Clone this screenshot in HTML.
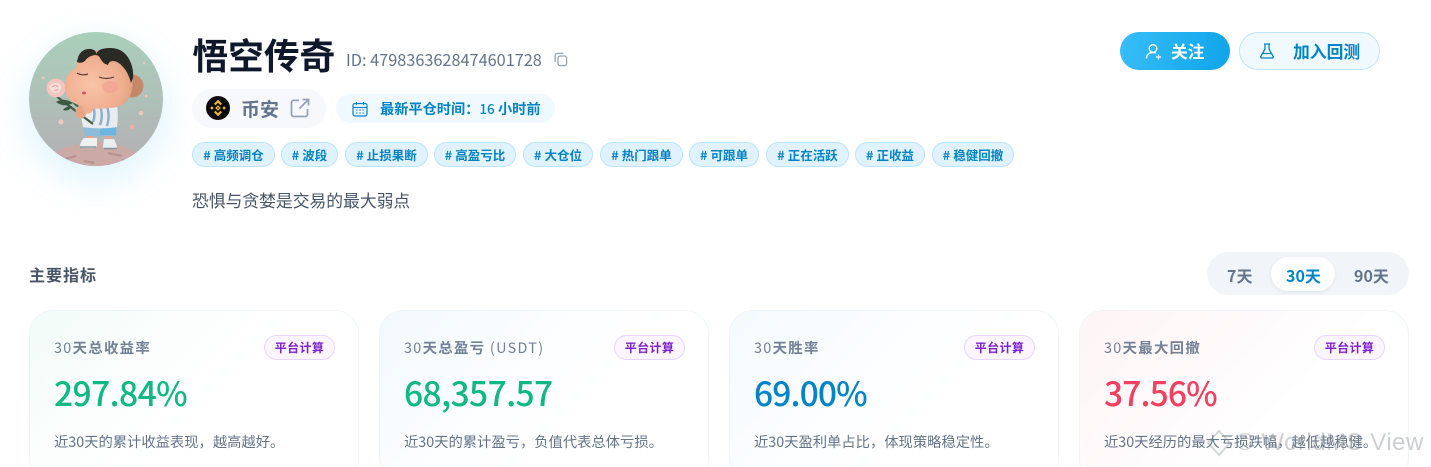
<!DOCTYPE html>
<html lang="zh"><head><meta charset="utf-8"><title>悟空传奇</title>
<style>
*{box-sizing:border-box;margin:0;padding:0}
html,body{width:1431px;height:467px;overflow:hidden;background:#fff}
body{position:relative;font-family:"Noto Sans CJK SC","Liberation Sans",sans-serif;color:#0f172a}
#clip{position:absolute;left:0;top:0;width:1431px;height:467px;overflow:hidden}
.a{position:absolute;white-space:nowrap}
.glow{left:29px;top:32px;width:134px;height:134px;border-radius:50%;box-shadow:0 12px 34px 4px rgba(56,189,248,.15)}
h1{left:192.500px;top:29px;font-size:35.7px;line-height:52px;font-weight:700;color:#0f172a}
.id{left:346px;top:48px;font-size:16.3px;line-height:22px;color:#64748b}
.ex{left:192px;top:89px;width:134px;height:39px;border-radius:20px;background:#f6f8fc}
.ext{left:241px;top:95px;font-size:19px;line-height:27px;font-weight:700;color:#64748b}
.time{left:336px;top:94px;width:219px;height:29px;border-radius:15px;background:#f0f9ff}
.tt{left:380px;top:98px;font-size:14.2px;line-height:21px;font-weight:700;color:#0284c7}
.tag{top:142px;height:25px;border-radius:13px;background:#e0f2fe;border:1px solid #bae6fd;color:#0284c7;font-size:12.5px;font-weight:700;line-height:23px;text-align:center}
.tag i{font-style:normal;font-weight:700;margin-right:3px}
.desc{left:192px;top:188px;font-size:16.8px;line-height:24px;color:#475569}
.main{left:29px;top:263px;font-size:16px;line-height:22px;font-weight:700;color:#475569;letter-spacing:1px}
.seg{left:1207px;top:252px;width:202px;height:43px;border-radius:22px;background:#f1f5f9}
.on{left:1271px;top:257px;width:64px;height:34px;border-radius:17px;background:#fff;box-shadow:0 1px 3px rgba(15,23,42,.08)}
.s{top:263px;font-size:16px;line-height:24px;font-weight:700;color:#64748b}
.btn1{left:1120px;top:32px;width:110px;height:38px;border-radius:19px;background:linear-gradient(100deg,#38bdf8,#0ea5e9)}
.btn2{left:1239px;top:32px;width:141px;height:38px;border-radius:19px;background:#f0f9ff;border:1px solid #bae6fd}
.bt{top:40px;font-size:16.8px;line-height:23px;font-weight:700}
.card{top:310px;width:330px;height:172px;border-radius:24px;border:1px solid #f1f5f9;background:#fff}
.l{top:338px;font-size:14.4px;line-height:20px;font-weight:700;color:#64748b;letter-spacing:1.3px;opacity:.9}
.l b{font-weight:400}
.b{top:335px;width:71px;height:25px;border-radius:13px;background:#faf5ff;border:1px solid #e9d5ff;color:#7e22ce;font-size:12px;line-height:23px;font-weight:700;text-align:center;letter-spacing:.4px}
.v{top:367px;font-size:33.6px;line-height:50px;font-weight:500;letter-spacing:-.6px}
.v2{letter-spacing:-.9px}
.d{top:431px;font-size:14.3px;line-height:22px;color:#64748b}
.wm{left:1236px;top:428px;font-size:24px;line-height:30px;color:rgba(120,130,135,.38);font-family:"Liberation Sans",sans-serif;letter-spacing:.5px}
</style></head><body><div id="clip">
<div class="a glow"></div>
<svg class="a" style="left:0;top:0" width="190" height="190" viewBox="0 0 190 190">
<defs>
<linearGradient id="bg" x1="0" y1="0" x2="0" y2="1"><stop offset="0" stop-color="#a9cfb9"/><stop offset=".5" stop-color="#afc0b8"/><stop offset="1" stop-color="#b4afb4"/></linearGradient>
<radialGradient id="face" cx=".4" cy=".6" r=".7"><stop offset="0" stop-color="#f8c4a8"/><stop offset=".65" stop-color="#f0ae90"/><stop offset="1" stop-color="#d9997a"/></radialGradient>
<clipPath id="c"><circle cx="96" cy="99" r="67"/></clipPath>
</defs>
<g clip-path="url(#c)">
<rect x="29" y="32" width="134" height="134" fill="url(#bg)"/>
<ellipse cx="96" cy="186" rx="62" ry="44" fill="#cba9a5"/>
<path d="M62 160l14-4M108 153l14 3M84 161l10 2M122 160l8 2" stroke="#a98a84" stroke-width="2" opacity=".7"/>
<circle cx="61" cy="122" r="2.5" fill="#f5c7bd"/><circle cx="141" cy="113" r="2.3" fill="#f2c6b8"/><circle cx="132" cy="127" r="2.3" fill="#eeb0a4"/><circle cx="146" cy="96" r="1.5" fill="#f2c6c0"/><circle cx="43" cy="78" r="1.5" fill="#f2c6c0"/><circle cx="144" cy="63" r="1.2" fill="#e9c5c0"/>
<!-- legs and shoes -->
<path d="M87 135h6v5h-6zM106 135h6v5h-6z" fill="#e8a586"/>
<path d="M84 138h13v6q0 4-3 4H83q-4 0-3-3q1-4 4-7z" fill="#eef1f2"/><path d="M104 139h10l3 7q0 3-3 3h-8q-3 0-3-3z" fill="#e9eef0"/>
<path d="M80 147h16M104 148.500h13" stroke="#7f97a0" stroke-width="1.500"/>
<!-- shorts -->
<path d="M83 125h34l-1 11H85z" fill="#8dbbd9"/><path d="M100 126h16v9h-16z" fill="#5db2e0" opacity=".7"/>
<!-- body -->
<path d="M80 103q18-8 36-3q3 13 1 27q-16 3-34 0q-3-13-3-24z" fill="#e8ebef"/>
<path d="M99 104q5 10 1 21M105 102q6 11 2 24M93 106q3 8 0 16" stroke="#8eaec6" stroke-width="2.400" fill="none"/>
<!-- stem and leaves -->
<path d="M56 96L93 124" stroke="#3f5d42" stroke-width="2.200"/>
<path d="M56 102q8-5 17 1q-9 5-17-1z" fill="#3a5a40"/><path d="M71 97q7 3 8 11q-7-3-8-11z" fill="#3f6244"/><path d="M63 110q3-4 9-4q-3 6-9 4z" fill="#3a5a40"/>
<!-- hands -->
<ellipse cx="81" cy="112" rx="5.500" ry="6.500" fill="#e8a586"/><ellipse cx="88" cy="108" rx="5.500" ry="5.500" fill="#eeb093"/>
<!-- rose -->
<circle cx="56" cy="88" r="9.500" fill="#f3c5c0"/><path d="M49 87q5-7 12-2q1 6-4 8q-6 0-8-6z" fill="#f9dcd6"/><path d="M52 87q4-3 6 0M54 90q3 1 4-1" stroke="#dda09c" fill="none"/>
<!-- ear -->
<circle cx="132" cy="86" r="11.500" fill="#c48868"/>
<!-- head -->
<path d="M65 85q0-11 11-17q1-15 25-18q21-2 29 11q4 14 2 29q-3 13-15 17q-24 4-39-2q-14-6-13-20z" fill="url(#face)"/>
<!-- hair -->
<path d="M77 62q2-14 14-13q6 1 5 6q1-7 14-7q13 0 19 11q5 9 4 19l-2 5q-3-11-8-16q-5-6-10-6q-4 0-5 4q-5-1-8-7q-1-3-5-3q-7 1-10 6q-4 3-8 1z" fill="#2b2b26"/>
<!-- eyes mouth -->
<path d="M77 73q5 3 11 1M99 77q7 3 15 0" stroke="#5a3a30" stroke-width="1.200" fill="none"/>
<ellipse cx="84" cy="93" rx="2" ry="1.500" fill="#d8546a"/>
<ellipse cx="110" cy="87" rx="8" ry="6" fill="#ef9d8f" opacity=".6"/>
</g>
</svg>

<h1 class="a">悟空传奇</h1>
<div class="a id">ID: 4798363628474601728</div>
<svg class="a" style="left:554px;top:52px" width="14" height="15" viewBox="0 0 14 15" fill="none" stroke="#94a3b8" stroke-width="1.3"><rect x="4" y="4" width="8.6" height="9.6" rx="2"/><path d="M9.5 1.4H3.2a2 2 0 0 0-2 2v6.8"/></svg>

<div class="a ex"></div>
<svg class="a" style="left:206px;top:96px" width="24" height="24" viewBox="0 0 24 24"><circle cx="12" cy="12" r="12" fill="#0b0b0b"/><g fill="#f3ba2f"><path d="M12 3.800l4 4-1.500 1.500L12 6.800 9.500 9.300 8 7.800z"/><path d="M12 20.200l-4-4 1.500-1.500 2.500 2.500 2.500-2.500 1.500 1.500z"/><path d="M5.900 10.300L7.600 12l-1.700 1.700L4.200 12z"/><path d="M18.100 10.300L19.800 12l-1.700 1.700L16.400 12z"/><path d="M12 9.200l2.800 2.800-2.800 2.800L9.200 12z"/></g><path d="M12 11l1 1-1 1-1-1z" fill="#0b0b0b"/></svg>
<div class="a ext">币安</div>
<svg class="a" style="left:290px;top:98px" width="20" height="20" viewBox="0 0 20 20" fill="none" stroke="#94a3b8" stroke-width="1.8"><path d="M9 2.400H3.500a2 2 0 0 0-2 2V16.500a2 2 0 0 0 2 2H15.500a2 2 0 0 0 2-2V11"/><path d="M9.500 10.500L18 2M12.500 1.500H18.500V7.500"/></svg>

<div class="a time"></div>
<svg class="a" style="left:352px;top:101px" width="16" height="16" viewBox="0 0 16 16" fill="none" stroke="#0284c7" stroke-width="1.2"><rect x="1" y="2.500" width="14" height="12.500" rx="2"/><path d="M1 6.500h14M4.500 1v3M11.500 1v3"/><path d="M4 9h1.500M7.300 9h1.500M10.500 9H12M4 12h1.500M7.300 12h1.500M10.500 12H12" stroke-width="1.100"/></svg>
<div class="a tt">最新平仓时间：<span style="font-weight:500;font-size:13.500px">16</span> 小时前</div>

<div class="a tag" style="left:192px;width:83px"><i>#</i>高频调仓</div>
<div class="a tag" style="left:281px;width:57px"><i>#</i>波段</div>
<div class="a tag" style="left:345px;width:83px"><i>#</i>止损果断</div>
<div class="a tag" style="left:434px;width:82px"><i>#</i>高盈亏比</div>
<div class="a tag" style="left:523px;width:70px"><i>#</i>大仓位</div>
<div class="a tag" style="left:600px;width:83px"><i>#</i>热门跟单</div>
<div class="a tag" style="left:689px;width:70px"><i>#</i>可跟单</div>
<div class="a tag" style="left:766px;width:83px"><i>#</i>正在活跃</div>
<div class="a tag" style="left:855px;width:70px"><i>#</i>正收益</div>
<div class="a tag" style="left:932px;width:82px"><i>#</i>稳健回撤</div>

<div class="a desc">恐惧与贪婪是交易的最大弱点</div>

<div class="a btn1"></div>
<svg class="a" style="left:1145px;top:43px" width="17" height="17" viewBox="0 0 17 17" fill="none" stroke="#fff" stroke-width="1.400"><circle cx="8" cy="5.500" r="3.800"/><path d="M1.500 15.500c0-3.500 2.500-6 6.500-6 1.200 0 2.200.2 3 .7"/><path d="M11 14h5M13.500 11.500v5" stroke-width="1.200"/></svg>
<div class="a bt" style="left:1171px;color:#fff">关注</div>
<div class="a btn2"></div>
<svg class="a" style="left:1259px;top:43px" width="16" height="16" viewBox="0 0 16 16" fill="none" stroke="#0284c7" stroke-width="1.300"><path d="M5 1h6M6 1v5L1.800 13.500a1 1 0 0 0 .9 1.500h10.600a1 1 0 0 0 .9-1.500L10 6V1"/><path d="M4 10.500h8"/></svg>
<div class="a bt" style="left:1293px;color:#0284c7">加入回测</div>

<div class="a main">主要指标</div>
<div class="a seg"></div><div class="a on"></div>
<div class="a s" style="left:1227px">7天</div>
<div class="a s" style="left:1286px;color:#0284c7">30天</div>
<div class="a s" style="left:1354px">90天</div>

<div class="a card" style="left:29px;background:linear-gradient(135deg,#f1fbf8 0%,#fbfefd 30%,#fff 55%)"></div>
<div class="a card" style="left:379px;background:linear-gradient(135deg,#f2f9fd 0%,#fbfdff 35%,#fff 60%)"></div>
<div class="a card" style="left:729px;background:linear-gradient(135deg,#f4fafd 0%,#fbfdff 35%,#fff 60%)"></div>
<div class="a card" style="left:1079px;background:linear-gradient(135deg,#fef4f5 0%,#fefafb 35%,#fff 60%)"></div>

<div class="a l" style="left:54px"><b>30</b>天总收益率</div>
<div class="a l" style="left:404px"><b>30</b>天总盈亏 <b>(USDT)</b></div>
<div class="a l" style="left:754px"><b>30</b>天胜率</div>
<div class="a l" style="left:1104px"><b>30</b>天最大回撤</div>

<div class="a b" style="left:264px">平台计算</div>
<div class="a b" style="left:614px">平台计算</div>
<div class="a b" style="left:964px">平台计算</div>
<div class="a b" style="left:1314px">平台计算</div>

<div class="a v" style="left:54px;color:#10b981">297.84%</div>
<div class="a v" style="left:404px;color:#10b981">68,357.57</div>
<div class="a v v2" style="left:754px;color:#0284c7">69.00%</div>
<div class="a v v2" style="left:1104px;color:#f43f5e">37.56%</div>

<div class="a d" style="left:54px">近30天的累计收益表现，越高越好。</div>
<div class="a d" style="left:404px">近30天的累计盈亏，负值代表总体亏损。</div>
<div class="a d" style="left:754px">近30天盈利单占比，体现策略稳定性。</div>
<div class="a d" style="left:1104px">近30天经历的最大亏损跌幅，越低越稳健。</div>

<svg class="a" style="left:1206px;top:428px" width="26" height="30" viewBox="0 0 26 30" fill="none" stroke="rgba(130,140,145,.35)" stroke-width="2"><path d="M13 3L24 15 13 27 2 15z"/></svg>
<div class="a wm">© WorldMS View</div>
</div></body></html>
